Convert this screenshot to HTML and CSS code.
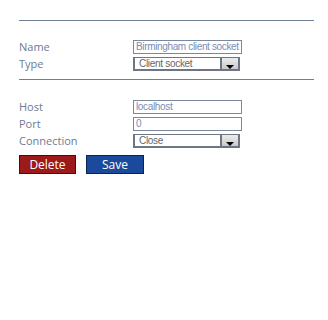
FILE: index.html
```html
<!DOCTYPE html>
<html>
  <head>
    <title>Socket settings</title>
    <meta charset="UTF-8">
    <link rel="stylesheet" href="styles.css">
  </head>
  <body>
    <div class="panel">
      <hr class="rule top">
      <div class="fields">
        <label class="lbl" for="name">Name</label>
        <div class="txt" id="name">Birmingham client socket</div>
        <label class="lbl">Type</label>
        <div class="sel"><span class="val">Client socket</span><span class="arrow"></span></div>
      </div>
      <hr class="rule mid">
      <div class="fields">
        <label class="lbl" for="host">Host</label>
        <div class="txt" id="host">localhost</div>
        <label class="lbl" for="port">Port</label>
        <div class="txt" id="port">0</div>
        <label class="lbl">Connection</label>
        <div class="sel"><span class="val">Close</span><span class="arrow"></span></div>
      </div>
      <div class="buttons">
        <button class="btn delete">Delete</button>
        <button class="btn save">Save</button>
      </div>
    </div>
  </body>
</html>
```
FILE: styles.css
```css
body{
   margin: 0;
   background: white;
   font-family: "Open Sans", "Liberation Sans", sans-serif;
}

.panel
{
   padding-left: 19px;
   width: 295px;
}

.rule
{
   border: 0;
   height: 1px;
   background: #6f7f96;
   margin: 0;
}
.rule.top { margin-top: 20px; }
.rule.mid { margin-top: 8px; }

.fields
{
   display: grid;
   grid-template-columns: 114px 109px;
   grid-auto-rows: 14px;
   row-gap: 3px;
   margin-top: 19px;
}
.rule.mid + .fields { margin-top: 20px; }

.lbl
{
   font-size: 11px;
   line-height: 14px;
   color: #6d7b95;
}

.txt
{
   box-sizing: border-box;
   border: 1px solid #7a879c;
   height: 14px;
   padding: 0 2px;
   font-family: "Liberation Sans", Arial, sans-serif;
   font-size: 10px;
   letter-spacing: -0.35px;
   line-height: 12px;
   color: #7b8db3;
   white-space: nowrap;
   overflow: hidden;
}

.sel
{
   box-sizing: border-box;
   width: 107px;
   height: 14px;
   border: 2px solid #6e7686;
   border-top-width: 1px;
   display: flex;
   font-family: "Liberation Sans", Arial, sans-serif;
   font-size: 10px;
   letter-spacing: -0.3px;
   line-height: 11px;
   color: #62666e;
}
.sel .val
{
   flex: 1;
   padding-left: 4px;
}
.sel .arrow
{
   width: 16px;
   border-left: 2px solid #6e7686;
   background: linear-gradient(#ececec, #c9c9c9);
   position: relative;
}
.sel .arrow::after
{
   content: "";
   position: absolute;
   left: 4px;
   bottom: 0;
   border-left: 4px solid transparent;
   border-right: 4px solid transparent;
   border-top: 4px solid black;
}

.buttons
{
   display: flex;
   gap: 10px;
   margin-top: 7px;
}

.btn
{
   height: 19px;
   padding: 0;
   font-family: "Open Sans", "Liberation Sans", sans-serif;
   font-size: 12px;
   line-height: 16px;
   color: white;
}
.delete
{
   width: 57px;
   background: #9c1a1a;
   border: 1px solid #4f0a0a;
}
.save
{
   width: 58px;
   background: #1b4a9c;
   border: 1px solid #0c2452;
}
```
